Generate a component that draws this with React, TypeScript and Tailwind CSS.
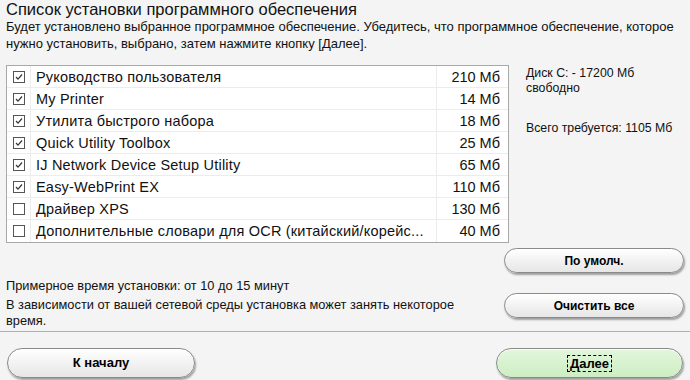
import React from 'react';

type Item = { name: string; size: string; checked: boolean };

// the last name is shown cut, as the installer shows it
const items: Item[] = [
  { name: 'Руководство пользователя', size: '210 Мб', checked: true },
  { name: 'My Printer', size: '14 Мб', checked: true },
  { name: 'Утилита быстрого набора', size: '18 Мб', checked: true },
  { name: 'Quick Utility Toolbox', size: '25 Мб', checked: true },
  { name: 'IJ Network Device Setup Utility', size: '65 Мб', checked: true },
  { name: 'Easy-WebPrint EX', size: '110 Мб', checked: true },
  { name: 'Драйвер XPS', size: '130 Мб', checked: false },
  { name: 'Дополнительные словари для OCR (китайский/корейс...', size: '40 Мб', checked: false },
];

function CheckBox({ checked }: { checked: boolean }) {
  return (
    <span className="flex h-[12px] w-[12px] items-center justify-center border border-[#555] bg-white">
      {checked && (
        <svg width="10" height="10" viewBox="0 0 10 10">
          <path d="M2 5 L4 7.2 L8 2.5" fill="none" stroke="#333" strokeWidth="1.2" />
        </svg>
      )}
    </span>
  );
}

// pill shaped button, like the installer's skin
function Pill({ label, green = false, focus = false, className = '' }: { label: string; green?: boolean; focus?: boolean; className?: string }) {
  return (
    <button
      className={
        'flex items-center justify-center rounded-full border border-[#8a8a8a] font-bold text-black shadow-[1px_2px_2px_rgba(0,0,0,0.35),inset_0_1px_1px_#fff] ' +
        (green ? 'bg-gradient-to-b from-[#e2f6dc] to-[#cdeec3] ' : 'bg-gradient-to-b from-[#ffffff] to-[#e6e6e6] ') +
        className
      }
    >
      <span className={focus ? 'border border-dashed border-black px-[2px] leading-[15px]' : ''}>{label}</span>
    </button>
  );
}

export default function App() {
  return (
    <div className="flex h-[380px] w-[690px] flex-col bg-[#f4f4f4] font-['Liberation_Sans',Arial,sans-serif] text-[#111]">
      <div className="px-[6px]">
        <h1 className="text-[16.5px] leading-[18px]">Список установки программного обеспечения</h1>
        <p className="text-[13px] leading-[17px]">
          Будет установлено выбранное программное обеспечение. Убедитесь, что программное обеспечение, которое<br />
          нужно установить, выбрано, затем нажмите кнопку [Далее].
        </p>
      </div>

      <div className="mt-[13px] flex px-[6px]">
        <div className="w-[503px] border border-[#a8a8a8] bg-white">
          {items.map((it) => (
            <div key={it.name} className="flex h-[22px] items-center border-b border-[#ececec] text-[14.5px] tracking-[0.2px] last:border-b-0">
              <div className="flex h-full w-[24px] items-center justify-center border-r border-[#ececec]">
                <CheckBox checked={it.checked} />
              </div>
              <div className="h-full min-w-0 flex-1 whitespace-nowrap pl-[5px] leading-[22px]">{it.name}</div>
              <div className="h-full w-[72px] border-l border-[#ececec] pr-[8px] text-right leading-[22px] tracking-normal">{it.size}</div>
            </div>
          ))}
        </div>
        <div className="ml-[17px] flex flex-col pt-[1px] text-[12.3px] leading-[15px]">
          <div>Диск C: - 17200 Мб<br />свободно</div>
          <div className="mt-[25px]">Всего требуется: 1105 Мб</div>
        </div>
      </div>

      <div className="mt-[5px] flex px-[6px]">
        <div className="flex-1 pt-[30px] text-[12.8px] leading-[16px]">
          <div>Примерное время установки: от 10 до 15 минут</div>
          <div className="mt-[3px] leading-[16px]">
            В зависимости от вашей сетевой среды установка может занять некоторое<br />время.
          </div>
        </div>
        <div className="flex w-[180px] flex-col gap-[20px]">
          <Pill label="По умолч." className="h-[25px] w-[180px] text-[12px]" />
          <Pill label="Очистить все" className="h-[25px] w-[180px] text-[12px]" />
        </div>
      </div>

      <div className="mt-[2px] border-t border-[#b0b0b0]" />

      <div className="flex items-start justify-between px-[7px] pt-[16px]">
        <Pill label="К началу" className="h-[30px] w-[188px] text-[13px]" />
        <Pill label="Далее" green focus className="h-[30px] w-[187px] text-[13px]" />
      </div>
    </div>
  );
}
